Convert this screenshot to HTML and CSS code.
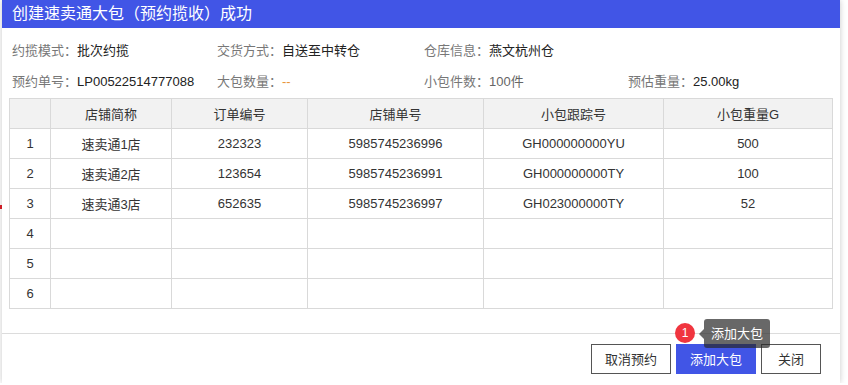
FILE: index.html
```html
<!DOCTYPE html>
<html lang="zh-CN">
<head>
    <meta charset="UTF-8">
    <title>创建速卖通大包</title>
    <link rel="stylesheet" href="styles.css">
</head>
<body>

<span class="edge-dot"></span>

<div class="dialog">
    <div class="dialog-title">创建速卖通大包（预约揽收）成功</div>

    <div class="info">
        <div><span class="label">约揽模式：</span>批次约揽</div>
        <div><span class="label">交货方式：</span>自送至中转仓</div>
        <div><span class="label">仓库信息：</span>燕文杭州仓</div>
        <div></div>
        <div><span class="label">预约单号：</span>LP00522514777088</div>
        <div><span class="label">大包数量：</span><span class="empty">--</span></div>
        <div><span class="label">小包件数：</span><span class="muted">100件</span></div>
        <div><span class="label">预估重量：</span>25.00kg</div>
    </div>

    <table class="grid">
        <colgroup>
            <col style="width:41px">
            <col style="width:121px">
            <col style="width:136px">
            <col style="width:176px">
            <col style="width:180px">
            <col>
        </colgroup>
        <thead>
            <tr>
                <th></th>
                <th>店铺简称</th>
                <th>订单编号</th>
                <th>店铺单号</th>
                <th>小包跟踪号</th>
                <th>小包重量G</th>
            </tr>
        </thead>
        <tbody>
            <tr><td>1</td><td>速卖通1店</td><td>232323</td><td>5985745236996</td><td>GH000000000YU</td><td>500</td></tr>
            <tr><td>2</td><td>速卖通2店</td><td>123654</td><td>5985745236991</td><td>GH000000000TY</td><td>100</td></tr>
            <tr><td>3</td><td>速卖通3店</td><td>652635</td><td>5985745236997</td><td>GH023000000TY</td><td>52</td></tr>
            <tr><td>4</td><td></td><td></td><td></td><td></td><td></td></tr>
            <tr><td>5</td><td></td><td></td><td></td><td></td><td></td></tr>
            <tr><td>6</td><td></td><td></td><td></td><td></td><td></td></tr>
        </tbody>
    </table>

    <div class="dialog-footer">
        <button class="btn">取消预约</button>
        <span class="btn-wrap">
            <button class="btn btn-primary">添加大包</button>
            <span class="badge">1</span>
            <span class="tip">添加大包</span>
        </span>
        <button class="btn btn-small">关闭</button>
    </div>
</div>

</body>
</html>
```

FILE: styles.css
```css
* {
    box-sizing: border-box;
}

body {
    margin: 0;
    background: #fff;
    font-family: "Liberation Sans", "Noto Sans CJK SC", sans-serif;
    font-size: 13px;
    color: #333;
}

.edge-dot {
    position: absolute;
    left: 0;
    top: 205px;
    width: 3px;
    height: 4px;
    background: #e0202a;
}

.dialog {
    position: relative;
    width: 838px;
    height: 383px;
    margin-left: 2px;
    background: #fff;
    box-shadow: 0 0 6px rgba(0, 0, 0, 0.22);
}

.dialog-title {
    height: 28px;
    line-height: 28px;
    padding-left: 10px;
    background: #4155e6;
    color: #fff;
    font-size: 16px;
}

.info {
    display: grid;
    grid-template-columns: 205px 207px 204px 1fr;
    grid-auto-rows: 31px;
    align-items: center;
    padding: 6px 10px 2px 10px;
    color: #222;
}

.label {
    color: #777;
}

.muted {
    color: #666;
}

.empty {
    color: #e8953a;
}

.grid {
    margin-left: 7px;
    width: 824px;
    border-collapse: collapse;
    table-layout: fixed;
}

.grid th,
.grid td {
    height: 30px;
    padding: 0;
    border: 1px solid #d9d9d9;
    text-align: center;
    font-weight: normal;
    color: #333;
}

.grid th {
    background: #f2f2f2;
}

.dialog-footer {
    position: absolute;
    left: 0;
    right: 0;
    bottom: 0;
    height: 50px;
    border-top: 1px solid #dcdcdc;
    display: flex;
    justify-content: flex-end;
    align-items: center;
    gap: 5px;
    padding: 0 19px 0 0;
}

.btn {
    width: 80px;
    height: 30px;
    border: 1px solid #555;
    background: #fff;
    color: #333;
    font-family: inherit;
    font-size: 13px;
    padding: 0;
}

.btn-small {
    width: 60px;
}

.btn-primary {
    border-color: #4155e6;
    background: #4155e6;
    color: #fff;
}

.btn-wrap {
    position: relative;
    display: flex;
}

.badge {
    position: absolute;
    left: -1px;
    top: -21px;
    width: 20px;
    height: 20px;
    border-radius: 50%;
    background: #f0353f;
    color: #fff;
    font-size: 12px;
    line-height: 20px;
    text-align: center;
}

.tip {
    position: absolute;
    left: 28px;
    top: -25px;
    width: 66px;
    height: 29px;
    border-radius: 3px;
    background: rgba(40, 40, 40, 0.7);
    color: #fff;
    font-size: 13px;
    line-height: 29px;
    text-align: center;
}

.tip::before {
    content: "";
    position: absolute;
    left: -5px;
    top: 10px;
    border-top: 5px solid transparent;
    border-bottom: 5px solid transparent;
    border-right: 5px solid rgba(40, 40, 40, 0.7);
}
```
